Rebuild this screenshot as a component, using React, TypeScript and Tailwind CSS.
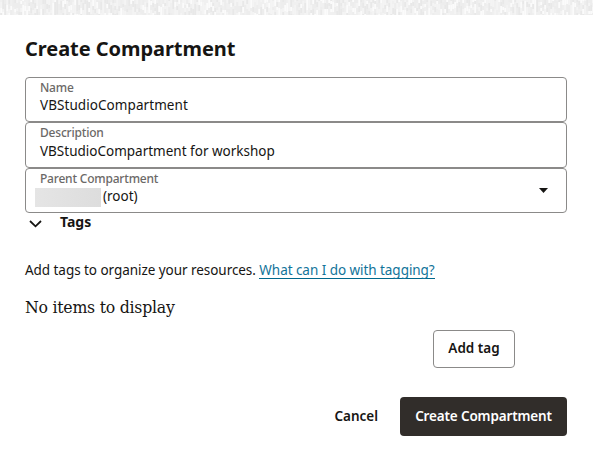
import React from "react";

type Fleck = { x: number; y: number; h: number; c: string };

// Deterministic woven texture made of short vertical flecks.
const flecks: Fleck[] = (() => {
  let seed = 7;
  const next = () => {
    seed = (seed * 1103515245 + 12345) % 2147483648;
    return seed / 2147483648;
  };
  const shades = ["#e8e8e8", "#ededed", "#f0f0f0", "#f4f4f4", "#fbfbfb"];
  const out: Fleck[] = [];
  for (let x = 0; x < 593; x += 2) {
    let y = -Math.floor(next() * 5);
    while (y < 15) {
      const h = 3 + Math.floor(next() * 4);
      out.push({ x, y, h, c: shades[Math.floor(next() * 5)] });
      y += h;
    }
  }
  return out;
})();

function TextureStrip() {
  return (
    <svg className="block h-[15px] w-full bg-[#f0f0f0]" viewBox="0 0 593 15" preserveAspectRatio="none">
      {flecks.map((f, i) => (
        <rect key={i} x={f.x + 0.3} y={f.y} width={1.8} height={f.h} fill={f.c} />
      ))}
    </svg>
  );
}

function Field({ label, className, children }: { label: string; className: string; children: React.ReactNode }) {
  return (
    <div className={`flex justify-between rounded-[4px] border border-[#8b8a89] pl-[14px] ${className}`}>
      <div className="flex flex-col pt-[2px]">
        <span className="h-[15px] text-[12px] leading-4 font-medium tracking-[-0.2px] text-[#6b6967]">{label}</span>
        {children}
      </div>
      {label === "Parent Compartment" && (
        <svg className="mt-[19px] mr-[18px] h-[5px] w-[9px]" viewBox="0 0 9 5">
          <path d="M0 0h9L4.5 5z" fill="#161513" />
        </svg>
      )}
    </div>
  );
}

export default function App() {
  return (
    <div className="h-[460px] w-[593px] overflow-hidden bg-white font-['Noto_Sans',sans-serif] text-[#161513]">
      <TextureStrip />
      <main className="flex flex-col pl-[25px] pr-[26px] whitespace-nowrap">
        <h1 className="mt-5 h-[42px] text-[20px] leading-7 font-bold tracking-[-0.05px]">
          <span>Create Compartment</span>
        </h1>
        <Field label="Name" className="h-[45px]">
          <span className="text-[13.5px] leading-5 tracking-[0.07px]">VBStudioCompartment</span>
        </Field>
        <Field label="Description" className="h-[46px]">
          <span className="pt-px text-[13.5px] leading-5">VBStudioCompartment for workshop</span>
        </Field>
        <Field label="Parent Compartment" className="h-[45px]">
          <span className="-ml-[5px] flex items-start gap-[2px] text-[13.5px] leading-5">
            <span className="mt-[2px] h-[19px] w-[66px] bg-linear-to-r from-[#e5e5e5] to-[#dddddd]" />
            <span>(root)</span>
          </span>
        </Field>
        <div className="flex h-5 items-center gap-[18px] pl-1">
          <svg className="mt-[2px] h-[8px] w-[13px]" viewBox="0 0 13 8">
            <path d="M1 1l5.5 5.3L12 1" fill="none" stroke="#161513" strokeWidth="1.8" />
          </svg>
          <span className="-mt-[2px] text-[14px] leading-5 font-bold">Tags</span>
        </div>
        <p className="mt-[27px] h-5 text-[13.5px] leading-5 tracking-[-0.05px]">
          <span>Add tags to organize your resources.</span>{" "}
          <a className="inline-block h-[19px] border-b border-[#00688c] text-[#12749a]">What can I do with tagging?</a>
        </p>
        <p className="mt-[15px] h-6 font-['DejaVu_Serif_Condensed','DejaVu_Serif',serif] text-[17.5px] leading-6 font-stretch-condensed tracking-[-0.25px]">
          No items to display
        </p>
        <div className="mt-[11px] flex justify-end pr-[52px]">
          <button className="h-[38px] w-[82px] rounded-[4px] border border-[#8b8a89] pb-[2px] text-[13.5px] leading-5 font-semibold">
            Add tag
          </button>
        </div>
        <div className="mt-[29px] flex justify-end gap-[22px]">
          <button className="pb-[2px] text-[13.5px] leading-5 font-semibold">Cancel</button>
          <button className="h-[39px] w-[167px] rounded-[4px] bg-[#312d2a] pb-[2px] text-[13.5px] leading-5 font-semibold tracking-[-0.15px] text-white">
            Create Compartment
          </button>
        </div>
      </main>
    </div>
  );
}
